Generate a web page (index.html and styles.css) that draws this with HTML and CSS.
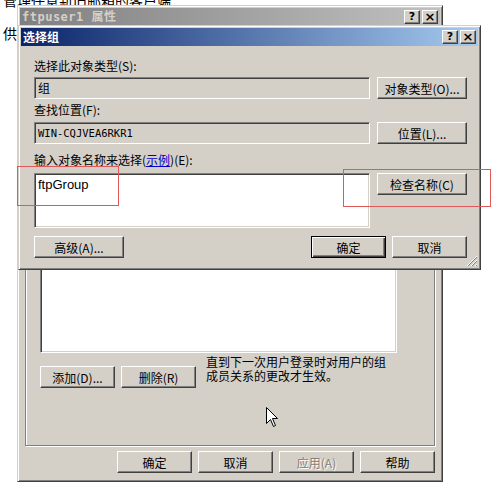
FILE: index.html
```html
<!DOCTYPE html>
<html lang="zh-CN">
<head>
    <meta charset="UTF-8">
    <title>选择组</title>
    <link rel="stylesheet" href="styles.css">
</head>
<body>
    <!-- page behind the dialogs -->
    <div class="page-text">
        <p class="line-cut">管理任意新旧邮箱的客户端</p>
        <p class="line">供</p>
    </div>

    <!-- back window: ftpuser1 properties -->
    <div class="window back">
        <div class="caption inactive">
            <span class="caption-title">ftpuser1 属性</span>
            <span class="caption-btns"><span class="cbtn">?</span><span class="cbtn close">×</span></span>
        </div>
        <div class="back-body">
            <div class="groupbox">
                <div class="listbox"></div>
                <div class="member-row">
                    <button class="btn">添加(D)...</button>
                    <button class="btn">删除(R)</button>
                    <p class="note">直到下一次用户登录时对用户的组<br>成员关系的更改才生效。</p>
                </div>
            </div>
            <div class="dialog-buttons">
                <button class="btn">确定</button>
                <button class="btn">取消</button>
                <button class="btn" disabled>应用(A)</button>
                <button class="btn">帮助</button>
            </div>
        </div>
    </div>

    <!-- front window: select group -->
    <div class="window front">
        <div class="caption">
            <span class="caption-title">选择组</span>
            <span class="caption-btns"><span class="cbtn">?</span><span class="cbtn close">×</span></span>
        </div>
        <div class="front-body">
            <label class="field-label first">选择此对象类型(S):</label>
            <div class="field-row">
                <div class="field readonly">组</div>
                <button class="btn wide">对象类型(O)...</button>
            </div>

            <label class="field-label">查找位置(F):</label>
            <div class="field-row">
                <div class="field readonly mono">WIN-CQJVEA6RKR1</div>
                <button class="btn wide">位置(L)...</button>
            </div>

            <label class="field-label third">输入对象名称来选择(<a href="#" class="link">示例</a>)(E):</label>
            <div class="field-row">
                <div class="field textarea">ftpGroup</div>
                <button class="btn wide">检查名称(C)</button>
            </div>

            <div class="bottom-row">
                <button class="btn wide">高级(A)...</button>
                <span class="spacer"></span>
                <button class="btn default">确定</button>
                <button class="btn">取消</button>
            </div>
        </div>
        <svg class="grip" width="12" height="12" viewBox="0 0 12 12">
            <path d="M11 1 L1 11 M11 5 L5 11 M11 9 L9 11" stroke="#fff" stroke-width="1"/>
            <path d="M11 2 L2 11 M11 6 L6 11 M11 10 L10 11" stroke="#808080" stroke-width="1"/>
        </svg>
    </div>

    <!-- red annotation boxes -->
    <div class="mark mark-name"></div>
    <div class="mark mark-check"></div>

    <!-- mouse pointer -->
    <svg class="cursor" width="13" height="21" viewBox="0 0 13 21">
        <path d="M0.5 0.5 L0.5 16.5 L4.5 12.5 L7.5 19.5 L9.5 18.5 L6.5 11.5 L11.5 11.5 Z" fill="#fff" stroke="#000" stroke-width="1"/>
    </svg>
</body>
</html>
```

FILE: styles.css
```css
body {
    margin: 0;
    background-color: #fff;
    font-family: "Noto Sans CJK SC", "Liberation Sans", sans-serif;
    font-size: 12px;
    color: #000;
    overflow: hidden;
}

.page-text {
    padding-left: 3px;
    font-size: 14px;
}

.page-text p {
    margin: 0;
}

.line-cut {
    margin-top: -9px !important;
    line-height: 18px;
}

.line {
    margin-top: 15px !important;
    line-height: 18px;
}

/* classic windows frame */
.window {
    position: absolute;
    box-sizing: border-box;
    background-color: #d4d0c8;
    border: 1px solid;
    border-color: #d4d0c8 #404040 #404040 #d4d0c8;
    box-shadow: inset 1px 1px #fff, inset -1px -1px #808080;
    padding: 2px;
    display: flex;
    flex-direction: column;
}

.back {
    left: 17px;
    top: 5px;
    width: 426px;
    height: 477px;
}

.front {
    left: 18px;
    top: 25px;
    width: 463px;
    height: 245px;
}

.caption {
    height: 18px;
    display: flex;
    align-items: center;
    justify-content: space-between;
    padding: 0 2px;
    background: linear-gradient(to right, #0a246a, #a6caf0);
    color: #fff;
    font-weight: bold;
    flex-shrink: 0;
}

.caption.inactive {
    background: linear-gradient(to right, #808080, #c0c0c0);
    color: #d4d0c8;
    font-family: "DejaVu Sans Mono", "Noto Sans CJK SC", monospace;
    letter-spacing: 0.5px;
}

.caption-title {
    line-height: 18px;
}

.caption-btns {
    display: flex;
    gap: 2px;
}

.cbtn {
    box-sizing: border-box;
    width: 16px;
    height: 14px;
    background-color: #d4d0c8;
    border: 1px solid;
    border-color: #fff #404040 #404040 #fff;
    box-shadow: inset -1px -1px #808080;
    color: #000;
    font-family: "DejaVu Sans", sans-serif;
    font-size: 11px;
    font-weight: bold;
    line-height: 11px;
    text-align: center;
    letter-spacing: 0;
}

.cbtn.close {
    font-size: 13px;
}

/* buttons */
.btn {
    box-sizing: border-box;
    width: 75px;
    height: 22px;
    margin: 0;
    padding: 0;
    background-color: #d4d0c8;
    border: 1px solid;
    border-color: #fff #404040 #404040 #fff;
    box-shadow: inset -1px -1px #808080;
    font-family: "Noto Sans CJK SC", sans-serif;
    font-size: 12px;
    color: #000;
    text-align: center;
}

.btn.wide {
    width: 90px;
}

.btn.default {
    border: 1px solid #000;
    box-shadow: inset 1px 1px #fff, inset -1px -1px #404040, inset -2px -2px #808080;
}

.btn:disabled {
    color: #808080;
    text-shadow: 1px 1px #fff;
}

/* back window body */
.back-body {
    padding: 0 5px;
}

.groupbox {
    box-sizing: border-box;
    margin-top: 170px;
    height: 250px;
    border: 1px solid #808080;
    box-shadow: inset 1px 1px #fff, 1px 1px #fff;
    padding: 10px 0 0 14px;
}

.listbox {
    box-sizing: border-box;
    width: 357px;
    height: 146px;
    background-color: #fff;
    border: 1px solid;
    border-color: #808080 #fff #fff #808080;
    box-shadow: inset 1px 1px #404040, inset -1px -1px #d4d0c8;
}

.member-row {
    display: flex;
    align-items: flex-start;
    gap: 6px;
    margin-top: 13px;
}

.note {
    margin: -11px 0 0 4px;
    line-height: 14px;
    white-space: nowrap;
}

.dialog-buttons {
    display: flex;
    justify-content: flex-end;
    gap: 6px;
    margin-top: 5px;
}

/* front window body */
.front-body {
    padding: 13px 11px 9px 13px;
    display: flex;
    flex-direction: column;
}

.field-label {
    display: block;
    line-height: 14px;
    height: 14px;
    margin-top: 4px;
    margin-bottom: 5px;
}

.field-label.first {
    margin-top: 0;
    margin-bottom: 4px;
}

.field-label.third {
    margin-top: 9px;
    margin-bottom: 6px;
}

.link {
    color: #0000cc;
}

.field-row {
    display: flex;
    align-items: flex-start;
    gap: 7px;
}

.field {
    box-sizing: border-box;
    width: 336px;
    height: 22px;
    padding: 2px 3px;
    background-color: #fff;
    border: 1px solid;
    border-color: #808080 #fff #fff #808080;
    box-shadow: inset 1px 1px #404040, inset -1px -1px #d4d0c8;
    line-height: 16px;
}

.field.readonly {
    background-color: #d4d0c8;
}

.field.mono {
    font-family: "DejaVu Sans Mono", monospace;
    font-size: 10.5px;
}

.field.textarea {
    height: 55px;
    font-family: "Liberation Sans", sans-serif;
    font-size: 13px;
    padding-top: 3px;
}

.bottom-row {
    display: flex;
    gap: 6px;
    margin-top: 8px;
}

.spacer {
    flex: 1;
}

.grip {
    position: absolute;
    right: 2px;
    bottom: 2px;
}

/* annotations */
.mark {
    position: absolute;
    border: 1px solid #e05858;
}

.mark-name {
    left: 17px;
    top: 166px;
    width: 100px;
    height: 38px;
}

.mark-check {
    left: 343px;
    top: 169px;
    width: 146px;
    height: 36px;
}

.cursor {
    position: absolute;
    left: 266px;
    top: 407px;
}
```
